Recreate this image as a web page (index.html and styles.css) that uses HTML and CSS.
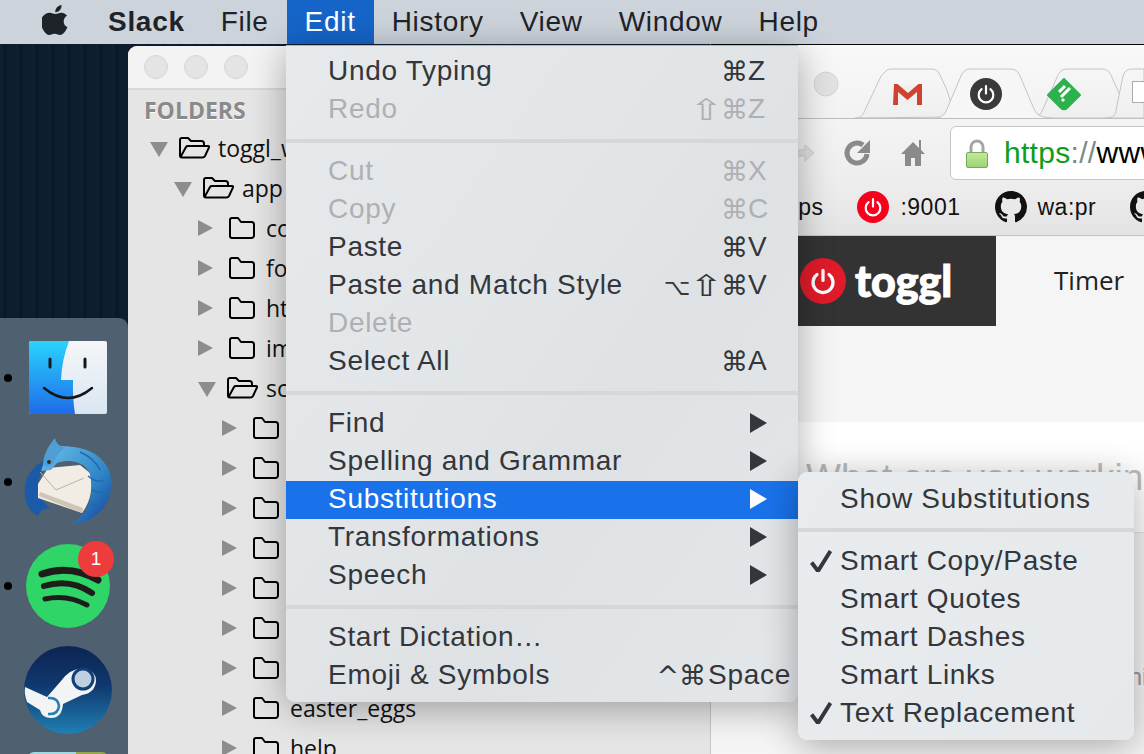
FILE: index.html
```html
<!DOCTYPE html>
<html>
<head>
    <title>Slack Edit menu</title>
    <meta charset="utf-8">
    <link rel="stylesheet" href="styles.css">
</head>
<body>
    <svg class="defs" width="0" height="0">
        <symbol id="folder" viewBox="0 0 26 22"><path d="M1 5V3a2 2 0 0 1 2-2h6l3 4h10.500a2.500 2.500 0 0 1 2.500 2.500V18.500a2.500 2.500 0 0 1-2.500 2.500H3a2 2 0 0 1-2-2z"/></symbol>
        <symbol id="folder-open" viewBox="0 0 31 22"><path d="M3 20.500a2 2 0 0 1-2-2V3a2 2 0 0 1 2-2h6l3 3h10.500a2.500 2.500 0 0 1 2.500 2.500V9M1.500 20L7 10q.6-1 2-1h20q1.600 0 1 1.400l-4 8.600q-.8 1.500-2.500 1.500H3"/></symbol>
        <symbol id="power" viewBox="0 0 24 24"><path d="M7.200 6.800a8 8 0 1 0 9.600 0M12 3.500V11.500"/></symbol>
        <symbol id="github" viewBox="0 0 16 16"><path d="M8 0C3.580 0 0 3.580 0 8c0 3.540 2.290 6.530 5.470 7.590.4.070.55-.17.55-.38 0-.19-.01-.82-.01-1.490-2.010.37-2.530-.49-2.690-.94-.09-.23-.48-.94-.82-1.130-.28-.15-.68-.52-.01-.53.63-.01 1.080.58 1.230.82.72 1.210 1.870.87 2.330.66.07-.52.28-.87.51-1.070-1.780-.2-3.640-.89-3.640-3.950 0-.87.31-1.590.82-2.150-.08-.2-.36-1.020.08-2.120 0 0 .67-.21 2.200.82.64-.18 1.320-.27 2-.27.68 0 1.360.09 2 .27 1.530-1.040 2.200-.82 2.200-.82.44 1.100.16 1.920.08 2.120.51.56.82 1.270.82 2.150 0 3.070-1.870 3.750-3.650 3.950.29.25.54.73.54 1.480 0 1.070-.01 1.930-.01 2.200 0 .21.15.46.55.38A8.013 8.013 0 0 0 16 8c0-4.420-3.580-8-8-8z"/></symbol>
        <symbol id="check" viewBox="0 0 22 22"><path d="M1.500 12.500L8 21 20.500 1"/></symbol>
    </svg>

    <header class="menubar">
        <svg class="apple" viewBox="0 0 26 30"><path d="M19.500 0c.2 2-.5 3.700-1.600 5-1.100 1.400-2.900 2.400-4.600 2.200-.2-1.800.6-3.700 1.700-4.900C16.200 1 18 .1 19.500 0zM25.500 22c-.8 1.700-1.100 2.400-2.100 3.900-1.400 2-3.300 4.100-5.500 4.100-2 0-2.500-1.300-5.300-1.300-2.800 0-3.400 1.300-5.400 1.300-2.200 0-3.900-2.100-5.300-4.100C-1.800 21-2 14.800.7 11.400 2.500 9.100 5.200 7.700 7.500 7.700c2.500 0 4 1.300 6 1.300 1.900 0 3.100-1.300 5.900-1.300 2 0 4.200 1.100 5.700 3-5 2.700-4.200 9.900.4 11.300z"/></svg>
        <span class="menubar-item app-name">Slack</span>
        <span class="menubar-item">File</span>
        <span class="menubar-item active">Edit</span>
        <span class="menubar-item">History</span>
        <span class="menubar-item">View</span>
        <span class="menubar-item">Window</span>
        <span class="menubar-item">Help</span>
    </header>

    <div class="window browser">
        <svg class="tabstrip" viewBox="0 0 434 74" width="434" height="74">
            <defs>
                <linearGradient id="tabfill" x1="0" y1="0" x2="0" y2="1"><stop offset="0" stop-color="#f6f6f6"/><stop offset="1" stop-color="#efefef"/></linearGradient>
            </defs>
            <circle class="dot" cx="116" cy="39" r="12"/>
            <path class="tab" d="M145 73c6 0 8-3 10-8l16-34 6-6q2-1 5-1h40q5 0 7 4l8 17 8 27z"/>
            <path class="tab" d="M322 73c6 0 9-4 11-9l15-34q3-6 9-6h35q6 0 9 6l15 34q3 9 18 9z"/>
            <path class="tab" d="M396 73c8 0 10-4 10-8l7-34q2-7 9-7h12v49z"/>
            <path class="tab active" d="M226 73c6 0 9-4 11-9l14-33q3-7 9-7h41q6 0 9 7l14 33q3 9 18 9" />
            <path class="gmail-back" d="M187 40h24v20h-24z"/>
            <path class="gmail-red" d="M184 39h3.500L198 48l10.500-9h3.500v21h-5V47l-9.500 8-9.500-8v13h-5z"/>
            <circle cx="276" cy="49" r="16" fill="#3a3a3a"/>
            <svg x="265" y="38" width="22" height="22" class="power-mark"><use href="#power"/></svg>
            <path d="M354 34l16 16-13 13a4 4 0 0 1-6 0l-13-13z" fill="#2bb24c" stroke="#2bb24c" stroke-width="2" stroke-linejoin="round"/>
            <path d="M349 47l6-6M351 52l9-9M348 56h.1M352 56l2-2" stroke="#fff" stroke-width="3"/>
            <rect x="422.500" y="36.500" width="16" height="21" fill="#fff" stroke="#aaa"/>
        </svg>

        <div class="toolbar">
            <svg class="nav-icon forward" viewBox="0 0 22 22"><path d="M10 3l9 8-9 8v-5H2V8h8z"/></svg>
            <svg class="nav-icon reload" viewBox="0 0 28 28"><path d="M24 15a10 10 0 1 1-4-9" /><path class="fill" d="M27 1v13H14z"/></svg>
            <svg class="nav-icon home" viewBox="0 0 26 28"><path class="fill" d="M13 3L1 15h4v12h6v-8h4v8h6V15h4l-4-4V1h-2v8z"/></svg>
            <div class="urlbar">
                <svg class="lock" viewBox="0 0 22 29">
                    <defs>
                        <linearGradient id="lockfill" x1="0" y1="0" x2="0" y2="1"><stop offset="0" stop-color="#c4ea9e"/><stop offset="1" stop-color="#9ad472"/></linearGradient>
                    </defs>
                    <path d="M5 14V8a6 6 0 0 1 12 0v6" fill="none" stroke="#a5a5a5" stroke-width="3"/>
                    <rect x=".5" y="13.500" width="21" height="15" rx="1.500" fill="url(#lockfill)" stroke="#79a860"/>
                </svg>
                <span class="url"><span class="scheme">https</span><span class="slashes">://</span>www.toggl.com</span>
            </div>
        </div>

        <div class="bookmarks">
            <span class="bookmark">Apps</span>
            <span class="bookmark">
                <span class="bm-power"><svg class="power-mark" width="22" height="22"><use href="#power"/></svg></span>
                :9001
            </span>
            <span class="bookmark"><svg class="octo" width="32" height="32"><use href="#github"/></svg>wa:pr</span>
            <span class="bookmark"><svg class="octo" width="32" height="32"><use href="#github"/></svg>wa:is</span>
        </div>

        <div class="page">
            <div class="topnav">
                <div class="logo">
                    <span class="logo-mark"><svg class="power-mark thick" width="30" height="30"><use href="#power"/></svg></span>
                    <span class="logo-text">toggl</span>
                </div>
                <span class="nav-link">Timer</span>
            </div>
            <div class="entry-band"><span class="entry-hint">What are you working on?</span></div>
            <div class="entry-foot">This</div>
        </div>
    </div>

    <aside class="window sidebar">
        <div class="titlebar">
            <span class="light"></span><span class="light"></span><span class="light"></span>
        </div>
        <h4 class="folders-title">FOLDERS</h4>
        <ul class="tree">
            <li class="row lvl0"><i class="tri open"></i><svg class="fo open"><use href="#folder-open"/></svg>toggl_web</li>
            <li class="row lvl1"><i class="tri open"></i><svg class="fo open"><use href="#folder-open"/></svg>app</li>
            <li class="row lvl2"><i class="tri"></i><svg class="fo"><use href="#folder"/></svg>components</li>
            <li class="row lvl2"><i class="tri"></i><svg class="fo"><use href="#folder"/></svg>fonts</li>
            <li class="row lvl2"><i class="tri"></i><svg class="fo"><use href="#folder"/></svg>html</li>
            <li class="row lvl2"><i class="tri"></i><svg class="fo"><use href="#folder"/></svg>images</li>
            <li class="row lvl2"><i class="tri open"></i><svg class="fo open"><use href="#folder-open"/></svg>scripts</li>
            <li class="row lvl3"><i class="tri"></i><svg class="fo"><use href="#folder"/></svg></li>
            <li class="row lvl3"><i class="tri"></i><svg class="fo"><use href="#folder"/></svg></li>
            <li class="row lvl3"><i class="tri"></i><svg class="fo"><use href="#folder"/></svg></li>
            <li class="row lvl3"><i class="tri"></i><svg class="fo"><use href="#folder"/></svg></li>
            <li class="row lvl3"><i class="tri"></i><svg class="fo"><use href="#folder"/></svg></li>
            <li class="row lvl3"><i class="tri"></i><svg class="fo"><use href="#folder"/></svg></li>
            <li class="row lvl3"><i class="tri"></i><svg class="fo"><use href="#folder"/></svg></li>
            <li class="row lvl3"><i class="tri"></i><svg class="fo"><use href="#folder"/></svg>easter_eggs</li>
            <li class="row lvl3"><i class="tri"></i><svg class="fo"><use href="#folder"/></svg>help</li>
        </ul>
    </aside>

    <nav class="dock">
        <div class="dock-item">
            <i class="running"></i>
            <svg class="dock-icon" viewBox="0 0 88 88">
                <defs>
                    <linearGradient id="finderblue" x1="0" y1="0" x2="0" y2="1"><stop offset="0" stop-color="#2ad3fd"/><stop offset="1" stop-color="#1e6ce9"/></linearGradient>
                    <linearGradient id="finderwhite" x1="0" y1="0" x2="0" y2="1"><stop offset="0" stop-color="#f5f6f8"/><stop offset="1" stop-color="#d9e6f2"/></linearGradient>
                </defs>
                <rect x="5" y="7" width="78" height="73" rx="2" fill="url(#finderwhite)"/>
                <path d="M7 7h38q-7 18-8 39h12q-.5 18 2 34H7a2 2 0 0 1-2-2V9a2 2 0 0 1 2-2z" fill="url(#finderblue)"/>
                <path d="M26 25v8M61 25v8" stroke="#14161a" stroke-width="3" stroke-linecap="round"/>
                <path d="M20 54q24 20 48 0" fill="none" stroke="#14161a" stroke-width="2.500" stroke-linecap="round"/>
            </svg>
        </div>
        <div class="dock-item">
            <i class="running"></i>
            <svg class="dock-icon" viewBox="0 0 88 88">
                <defs>
                    <linearGradient id="birdblue" x1="0" y1="0" x2="1" y2="1"><stop offset="0" stop-color="#6cbfe8"/><stop offset=".6" stop-color="#2f86c8"/><stop offset="1" stop-color="#123f96"/></linearGradient>
                </defs>
                <path d="M22 22C6 28 -1 44 1 58c1 10 6 16 13 20 2-6 5-8 12-7-8-8-14-18-11-30z" fill="#1b5aa8"/>
                <path d="M14 46l10-16 32-3 10 8c3 15 1 28-8 40L14 60z" fill="#f1ece4"/>
                <path d="M16 34l16 18 28-12" fill="none" stroke="#b9b2a6"/>
                <path d="M15 58l43 17 1-5-43-16z" fill="#cfc5b6"/>
                <path d="M30 8c12 0 34 0 46 12 10 10 13 20 11 32-2 16-16 32-40 35 12-8 18-18 20-30 2-14 0-24-8-30-8-5-18-5-26-2l-6 7-10 1 3-9c3-6 5-14 10-16z" fill="url(#birdblue)"/>
                <path d="M19 26C20 14 26 6 31 0c1 6 5 8 10 10-6 4-10 10-12 16l-7 3z" fill="#4f9fd6"/>
                <path d="M56 14q14 6 20 18M64 38q10 8 16 4M68 52q8 4 14 2M66 66q6 2 10 0" fill="none" stroke="#1f6aae" stroke-width="1.500"/>
                <circle cx="25" cy="24" r="2" fill="#3b2a20"/>
            </svg>
        </div>
        <div class="dock-item">
            <i class="running"></i>
            <svg class="dock-icon" viewBox="0 0 88 88">
                <circle cx="44" cy="44" r="42" fill="#2fd566"/>
                <g fill="none" stroke="#1d1d1b" stroke-linecap="round">
                    <path d="M18 32q28-10 56 6" stroke-width="7"/>
                    <path d="M20 44q26-8 48 7" stroke-width="6"/>
                    <path d="M21 57q22-5 42 6" stroke-width="5"/>
                </g>
            </svg>
            <span class="badge">1</span>
        </div>
        <div class="dock-item">
            <i class="hidden-dot"></i>
            <svg class="dock-icon" viewBox="0 0 88 88">
                <defs>
                    <linearGradient id="steamfill" x1="0" y1="0" x2="0" y2="1"><stop offset="0" stop-color="#0c2453"/><stop offset=".45" stop-color="#10386e"/><stop offset="1" stop-color="#1f80b4"/></linearGradient>
                </defs>
                <circle cx="44" cy="44" r="44" fill="url(#steamfill)"/>
                <path d="M1 41l22 10 14-16q10-14 24-12 11 2 11 12-1 12-14 14L39 58q-1 14-12 14-9 0-11-8L3 56Q0 48 1 41z" fill="#f2f4f6"/>
                <circle cx="59" cy="33" r="10" fill="#bdd0e2" stroke="#123f78" stroke-width="3"/>
                <path d="M24 52q10-1 11 8-1 9-11 8" fill="none" stroke="#2a7db4" stroke-width="2.500"/>
            </svg>
        </div>
        <div class="dock-next"></div>
    </nav>

    <div class="menu edit-menu">
        <div class="menu-item"><span>Undo Typing</span><span class="keys"><b>⌘</b><em>Z</em></span></div>
        <div class="menu-item off"><span>Redo</span><span class="keys"><b><span class="shift">⇧</span>⌘</b><em>Z</em></span></div>
        <hr>
        <div class="menu-item off"><span>Cut</span><span class="keys"><b>⌘</b><em>X</em></span></div>
        <div class="menu-item off"><span>Copy</span><span class="keys"><b>⌘</b><em>C</em></span></div>
        <div class="menu-item"><span>Paste</span><span class="keys"><b>⌘</b><em>V</em></span></div>
        <div class="menu-item"><span>Paste and Match Style</span><span class="keys"><b><span class="option">⌥</span><span class="shift">⇧</span>⌘</b><em>V</em></span></div>
        <div class="menu-item off"><span>Delete</span></div>
        <div class="menu-item"><span>Select All</span><span class="keys"><b>⌘</b><em>A</em></span></div>
        <hr>
        <div class="menu-item"><span>Find</span><i class="arrow"></i></div>
        <div class="menu-item"><span>Spelling and Grammar</span><i class="arrow"></i></div>
        <div class="menu-item selected"><span>Substitutions</span><i class="arrow"></i></div>
        <div class="menu-item"><span>Transformations</span><i class="arrow"></i></div>
        <div class="menu-item"><span>Speech</span><i class="arrow"></i></div>
        <hr>
        <div class="menu-item"><span>Start Dictation…</span></div>
        <div class="menu-item"><span>Emoji &amp; Symbols</span><span class="keys wide"><b>^⌘</b><em>Space</em></span></div>
    </div>

    <div class="menu sub-menu">
        <div class="menu-item"><span>Show Substitutions</span></div>
        <hr>
        <div class="menu-item"><svg class="tick"><use href="#check"/></svg><span>Smart Copy/Paste</span></div>
        <div class="menu-item"><span>Smart Quotes</span></div>
        <div class="menu-item"><span>Smart Dashes</span></div>
        <div class="menu-item"><span>Smart Links</span></div>
        <div class="menu-item"><svg class="tick"><use href="#check"/></svg><span>Text Replacement</span></div>
    </div>
</body>
</html>
```

FILE: styles.css
```css
* {
    box-sizing: border-box;
}
html, body {
    margin: 0;
    height: 100%;
}
body {
    position: relative;
    width: 1144px;
    height: 754px;
    overflow: hidden;
    font-family: "Liberation Sans", Arial, sans-serif;
    background-color: #0b1b2c;
    background-image: repeating-linear-gradient(90deg, rgba(255, 255, 255, 0.02) 0 3px, rgba(0, 0, 0, 0.06) 3px 7px, rgba(255, 255, 255, 0.01) 7px 16px);
}
.defs {
    position: absolute;
}

/* top bar */
.menubar {
    display: flex;
    align-items: center;
    height: 44px;
    background: #ccd3db;
    color: #1e2329;
    font-size: 28px;
    letter-spacing: 0.7px;
    padding-left: 42px;
    position: relative;
}
.apple {
    width: 26px;
    height: 30px;
    fill: #1e2329;
    margin-right: 22px;
    margin-top: -4px;
}
.menubar-item {
    padding: 0 18px;
    line-height: 44px;
    height: 44px;
}
.app-name {
    font-weight: bold;
}
.menubar-item.active {
    background: #1565c8;
    color: #fff;
}

/* windows on the desktop */
.window {
    position: absolute;
}
.sidebar {
    left: 128px;
    top: 46px;
    width: 582px;
    height: 708px;
    background: #e5e5e5;
    border-top-left-radius: 9px;
    overflow: hidden;
}
.titlebar {
    display: flex;
    align-items: center;
    gap: 16px;
    height: 44px;
    padding-left: 16px;
    background: #f3f3f3;
    border-bottom: 2px solid #d8d8d8;
}
.light {
    width: 24px;
    height: 24px;
    border-radius: 50%;
    background: #e4e4e4;
    border: 1px solid #d6d6d6;
}
.folders-title {
    margin: 0;
    padding: 6px 0 0 16px;
    height: 38px;
    font-family: "Open Sans", sans-serif;
    font-size: 23px;
    line-height: 28px;
    font-weight: bold;
    color: #8a8a8a;
    text-shadow: 0 1px 0 #fff;
}
.tree {
    list-style: none;
    margin: 0;
    padding: 0;
}
.row {
    display: flex;
    align-items: center;
    height: 40px;
    font-family: "Open Sans", "DejaVu Sans", sans-serif;
    font-size: 23px;
    color: #111;
    white-space: nowrap;
}
.lvl0 { padding-left: 22px; }
.lvl1 { padding-left: 46px; }
.lvl2 { padding-left: 70px; }
.lvl3 { padding-left: 94px; }
.tri {
    width: 0;
    height: 0;
    margin-right: 16px;
    border-style: solid;
    border-width: 8px 0 8px 15px;
    border-color: transparent transparent transparent #8d8d8d;
}
.tri.open {
    margin: 2px 11px 0 0;
    border-width: 15px 9px 0 9px;
    border-color: #8d8d8d transparent transparent transparent;
}
.fo {
    width: 26px;
    height: 22px;
    margin-right: 11px;
    fill: none;
    stroke: #000;
    stroke-width: 2;
    stroke-linejoin: round;
}
.fo.open {
    width: 31px;
    margin-right: 8px;
}

/* dock */
.dock {
    position: absolute;
    left: 0;
    top: 318px;
    width: 128px;
    height: 436px;
    padding-top: 8px;
    background: #4f6070;
    border-top-right-radius: 9px;
}
.dock-item {
    position: relative;
    display: flex;
    align-items: center;
    gap: 12px;
    height: 104px;
    padding-left: 4px;
}
.running, .hidden-dot {
    width: 8px;
    height: 8px;
    border-radius: 50%;
    background: #000;
}
.hidden-dot {
    background: transparent;
}
.dock-icon {
    width: 88px;
    height: 88px;
}
.badge {
    position: absolute;
    left: 78px;
    top: 7px;
    width: 36px;
    height: 36px;
    line-height: 36px;
    border-radius: 50%;
    background: #ee3b3b;
    color: #fff;
    font-size: 19px;
    text-align: center;
}
.dock-next {
    width: 80px;
    height: 10px;
    margin: 10px 0 0 28px;
    border-radius: 6px 6px 0 0;
    background: linear-gradient(90deg, #9fd8e0 0 60%, #94a84a 60%);
}

/* browser behind the menus */
.browser {
    left: 710px;
    top: 44px;
    width: 434px;
    height: 710px;
    background: #f7f7f7;
    border-top: 1px solid #05080c;
    border-left: 1px solid #c6c6c6;
    overflow: hidden;
}
.tabstrip {
    display: block;
    margin: 0 0 -1px -1px;
    background: linear-gradient(#f8f8f8, #f2f2f2);
}
.dot {
    fill: #e2e2e2;
    stroke: #d4d4d4;
}
.tab {
    fill: url(#tabfill);
    stroke: #c4c4c4;
}
.tab.active {
    fill: #f6f6f6;
}
.gmail-back {
    fill: #efefef;
}
.gmail-red {
    fill: #d2402f;
}
.power-mark {
    fill: none;
    stroke: #fff;
    stroke-width: 2.4;
    stroke-linecap: round;
}
.power-mark.thick {
    stroke-width: 2.6;
}
.toolbar {
    display: flex;
    align-items: center;
    height: 72px;
    padding: 0 0 3px 84px;
    background: linear-gradient(#f4f4f4, #ececec);
    border-top: 1px solid #bdbdbd;
}
.nav-icon {
    flex: none;
    fill: none;
    stroke: #8a8a8a;
    stroke-width: 5;
}
.nav-icon .fill {
    fill: #8a8a8a;
    stroke: none;
}
.forward {
    width: 22px;
    height: 22px;
    fill: #e0e0e0;
    stroke: #cfcfcf;
    stroke-width: 1;
    margin-right: 26px;
}
.reload {
    width: 28px;
    height: 28px;
    margin-right: 29px;
}
.home {
    width: 26px;
    height: 28px;
    margin-right: 24px;
}
.urlbar {
    flex: none;
    display: flex;
    align-items: center;
    width: 260px;
    height: 54px;
    padding-left: 15px;
    background: #fff;
    border: 1px solid #c6c6c6;
    border-radius: 6px;
}
.lock {
    flex: none;
    width: 22px;
    height: 29px;
    margin-right: 16px;
}
.url {
    font-size: 30px;
    letter-spacing: 0.3px;
    color: #000;
    white-space: nowrap;
}
.scheme {
    color: #0f9d1a;
}
.slashes {
    color: #7a8a8a;
}
.bookmarks {
    display: flex;
    align-items: center;
    gap: 34px;
    height: 46px;
    padding: 0 0 11px 58px;
    font-size: 23px;
    letter-spacing: 0.5px;
    color: #111;
    background: linear-gradient(#ececec, #e3e3e3);
    border-bottom: 1px solid #c4c4c4;
    white-space: nowrap;
}
.bookmark {
    display: flex;
    align-items: center;
    gap: 11px;
}
.bm-power {
    display: flex;
    align-items: center;
    justify-content: center;
    width: 32px;
    height: 32px;
    border-radius: 50%;
    background: #f6021c;
}
.octo {
    fill: #111;
}
.page {
    background: #f5f5f5;
    height: 600px;
}
.topnav {
    display: flex;
    align-items: center;
    height: 90px;
}
.logo {
    display: flex;
    align-items: center;
    gap: 9px;
    width: 285px;
    height: 90px;
    padding-left: 89px;
    background: #333;
}
.logo-mark {
    display: flex;
    align-items: center;
    justify-content: center;
    width: 46px;
    height: 46px;
    border-radius: 50%;
    background: #e01b2a;
}
.logo-text {
    margin-top: -2px;
    font-family: Lato, sans-serif;
    font-weight: 900;
    font-size: 43px;
    color: #fff;
    -webkit-text-stroke: 1px #fff;
}
.nav-link {
    margin: -2px 0 0 58px;
    font-family: "Open Sans", sans-serif;
    font-size: 26px;
    color: #222;
}
.entry-band {
    height: 111px;
    margin-top: 96px;
    padding: 35px 0 0 95px;
    background: #fff;
    border-bottom: 1px solid #e2e2e2;
    font-size: 37px;
    color: #bbb;
    white-space: nowrap;
    overflow: hidden;
}
.entry-foot {
    margin-top: 130px;
    padding-left: 403px;
    font-size: 24px;
    color: #999;
}

/* the open menus */
.menu {
    position: absolute;
    background: linear-gradient(125deg, #e7eaec, #e2e5e8 45%, #dfe2e5 60%, #e4e7ea);
    color: #33363a;
    font-size: 28px;
    letter-spacing: 0.7px;
    box-shadow: 0 6px 36px rgba(0, 0, 0, 0.32);
}
.edit-menu {
    left: 286px;
    top: 45px;
    width: 512px;
    height: 657px;
    padding: 7px 0 8px;
    border-radius: 0 0 9px 9px;
    border-top: 1px solid #aeb5bb;
}
.sub-menu {
    left: 798px;
    top: 472px;
    width: 336px;
    height: 268px;
    padding: 8px 0;
    border-radius: 9px;
    background: linear-gradient(125deg, #e9ecef, #e6e9ec);
}
.menu-item {
    position: relative;
    display: flex;
    align-items: center;
    justify-content: space-between;
    height: 38px;
    padding: 0 31px 0 42px;
    white-space: nowrap;
}
.edit-menu .menu-item {
    padding-bottom: 2px;
}
.menu hr {
    height: 4px;
    margin: 10px 0;
    border: none;
    background: #d5d8db;
}
.off {
    color: #aeb0b3;
}
.selected {
    background: #1a72ea;
    color: #fff;
}
.keys {
    display: flex;
    align-items: center;
}
.keys b {
    font-family: "DejaVu Sans", sans-serif;
    font-weight: normal;
    font-size: 27px;
    letter-spacing: 0;
}
.keys em {
    font-style: normal;
    width: 19px;
}
.shift {
    display: inline-block;
    margin: 0 3px 0 5px;
    transform: scale(1.5, 1.1);
}
.option {
    display: inline-block;
    font-size: 23px;
}
.keys.wide {
    margin-right: -24px;
}
.keys.wide b {
    margin-right: 2px;
}
.keys.wide em {
    width: auto;
}
.arrow {
    width: 0;
    height: 0;
    border-style: solid;
    border-width: 10px 0 10px 17px;
    border-color: transparent transparent transparent #33363a;
}
.selected .arrow {
    border-left-color: #fff;
}
.tick {
    position: absolute;
    left: 12px;
    top: 8px;
    width: 22px;
    height: 22px;
    fill: none;
    stroke: #33363a;
    stroke-width: 4;
}
```
